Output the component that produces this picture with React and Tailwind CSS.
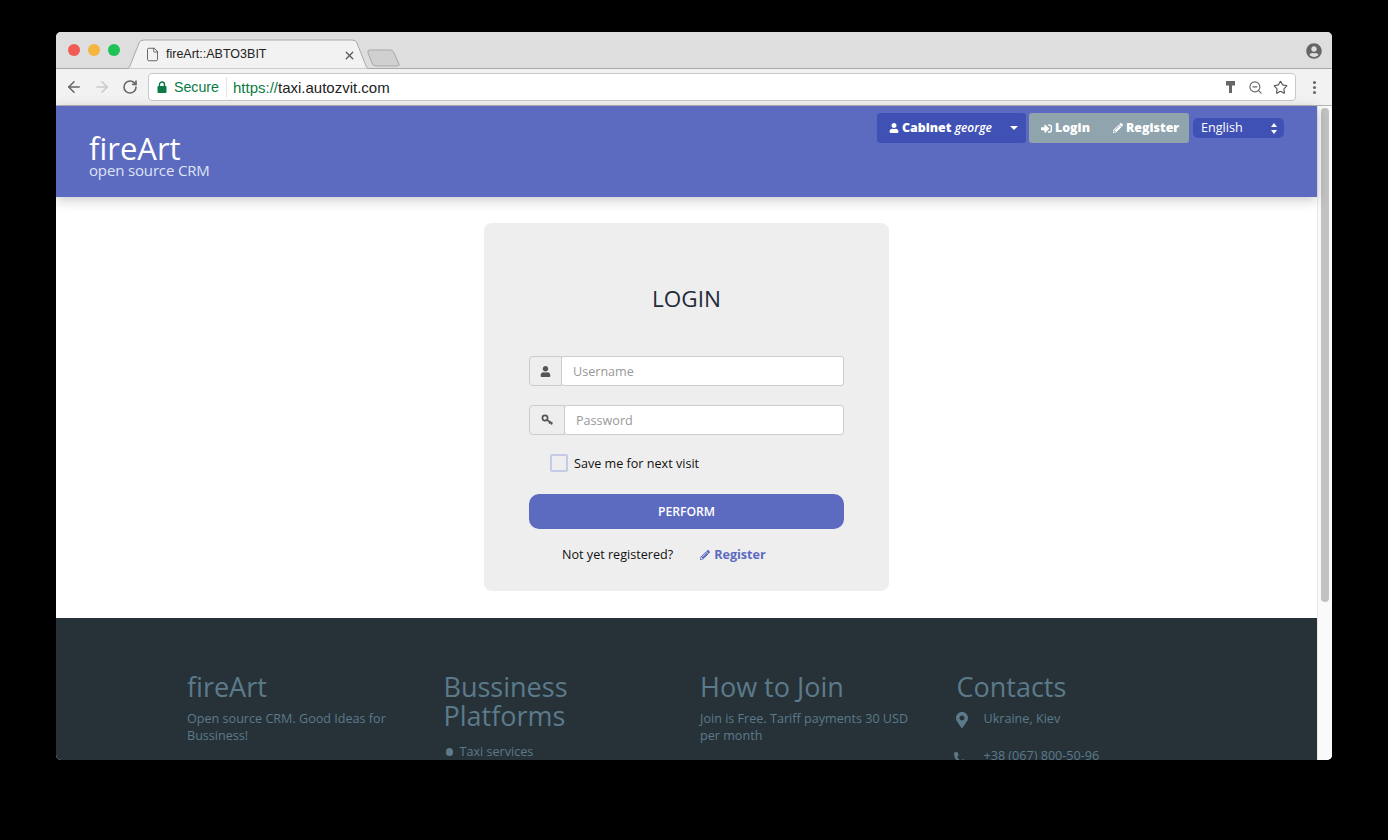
import React from "react";
import { FaUser, FaSignInAlt, FaPencilAlt, FaMapMarkerAlt, FaPhone, FaUserCircle } from "react-icons/fa";
import { ArrowLeft, ArrowRight, RotateCw, ZoomOut, Star, X, File } from "lucide-react";

const font = "font-['Open_Sans',sans-serif]";

function TabBar() {
  return (
    <div className="relative h-[37px] bg-[#dedede] border-b border-[#a9a9a9] flex items-center pl-[12px] font-['Liberation_Sans',sans-serif]">
      <div className="flex gap-2 items-center">
        <span className="w-3 h-3 rounded-full bg-[#f25b54]" />
        <span className="w-3 h-3 rounded-full bg-[#f5b53f]" />
        <span className="w-3 h-3 rounded-full bg-[#1dc455]" />
      </div>
      <svg className="absolute left-[70px] top-[7px]" width="280" height="30" viewBox="0 0 280 30">
        <path d="M0 29.5 H1 Q3 29.5 4 27 L13 4 Q14 1 18 1 H226 Q230 1 231 4 L240 27 Q241 29.5 243 29.5" fill="#f2f2f2" stroke="#a9a9a9" />
        <path d="M242 14 Q241 11 244 11 H264 Q267 11 268 14 L273 25 Q274 27 271 27 H250 Q247 27 246 24 Z" fill="#d0d0d0" stroke="#a8a8a8" />
      </svg>
      <File className="absolute left-[89px] top-[15px] text-[#555]" size={15} strokeWidth={1.4} />
      <span className="absolute left-[110px] top-[15px] text-[12.5px] leading-[15px] text-[#222]">fireArt::ABTO3BIT</span>
      <X className="absolute left-[287px] top-[17px] text-[#555]" size={13} strokeWidth={2.4} />
      <FaUserCircle className="absolute right-[10px] top-[11px] text-[#666]" size={16} />
    </div>
  );
}

function Toolbar() {
  return (
    <div className="h-[37px] bg-[#f2f2f2] border-b border-[#b5b5b5] flex items-center pl-[9px] pr-[16px] font-['Liberation_Sans',sans-serif]">
      <ArrowLeft className="text-[#666]" size={18} strokeWidth={2} />
      <ArrowRight className="ml-[10px] text-[#c9c9c9]" size={18} strokeWidth={2} />
      <RotateCw className="ml-[11px] text-[#666]" size={16} strokeWidth={2.4} />
      <div className="ml-[10px] flex-1 h-[28px] bg-white border border-[#c8c8c8] rounded-[4px] flex items-center">
        <svg className="ml-[8px]" width="10" height="12" viewBox="0 0 10 12">
          <path d="M2.5 5V3.5a2.5 2.5 0 0 1 5 0V5" fill="none" stroke="#0b7a45" strokeWidth="1.4" />
          <rect x="0.5" y="5" width="9" height="7" rx="1" fill="#0b7a45" />
        </svg>
        <span className="ml-[7px] text-[14.2px] text-[#0b7a45] leading-none">Secure</span>
        <span className="ml-[7px] w-px h-[20px] bg-[#e2e2e2]" />
        <span className="ml-[6px] text-[15px] leading-none text-[#0b7a45]">https://<span className="text-[#222]">taxi.autozvit.com</span></span>
        <svg className="ml-auto" width="9" height="14" viewBox="0 0 9 14"><path d="M0 1h9v4.5H6V13H3V5.5H0z" fill="#666" /></svg>
        <ZoomOut className="ml-[13px] text-[#666]" size={15} strokeWidth={1.8} />
        <Star className="ml-[10px] mr-[7px] text-[#555]" size={15} strokeWidth={1.8} />
      </div>
      <div className="ml-[17px] flex flex-col gap-[2px]">
        <span className="w-[3px] h-[3px] rounded-full bg-[#666]" />
        <span className="w-[3px] h-[3px] rounded-full bg-[#666]" />
        <span className="w-[3px] h-[3px] rounded-full bg-[#666]" />
      </div>
    </div>
  );
}

function Header() {
  return (
    <header className="relative z-10 h-[91px] bg-[#5c6bc0] shadow-[0_3px_12px_rgba(0,0,0,0.22)] flex justify-between pl-[33px] pr-[33px]">
      <div className="pt-[27px] text-white">
        <div className="text-[31px] leading-[30px]">fireArt</div>
        <div className="text-[15px] leading-[14px] text-[#dfe3f5] tracking-[-0.15px]">open source CRM</div>
      </div>
      <div className="pt-[7px] flex items-start text-white text-[12.4px] font-extrabold">
        <div className="w-[149px] h-[30px] bg-[#3f51b5] rounded-[3px] flex items-center pl-[12px]">
          <FaUser size={10} />
          <span className="ml-[3px]">Cabinet <em className="font-semibold text-[12px]">george</em></span>
          <span className="ml-auto mr-[8px] w-0 h-0 border-x-[4px] border-x-transparent border-t-[4px] border-t-white" />
        </div>
        <div className="ml-[3px] w-[160px] h-[30px] bg-[#90a4ae] rounded-[3px] flex items-center pl-[12px]">
          <FaSignInAlt size={11} />
          <span className="ml-[3px]">Login</span>
          <FaPencilAlt className="ml-[23px]" size={10} />
          <span className="ml-[3px]">Register</span>
        </div>
        <div className="ml-[4px] mt-[5px] w-[91px] h-[20px] bg-[#3f51b5] rounded-[5px] flex items-center pl-[8px] font-normal text-[12.6px]">
          <span>English</span>
          <svg className="ml-auto mr-[7px]" width="6" height="11" viewBox="0 0 6 11"><path d="M3 0l3 4H0zM3 11L0 7h6z" fill="#fff" /></svg>
        </div>
      </div>
    </header>
  );
}

function KeyIcon() {
  return (
    <svg width="13" height="12" viewBox="0 0 13 12" fill="none" stroke="#555">
      <circle cx="4" cy="4" r="2.6" strokeWidth="1.7" />
      <path d="M6 6l5.5 3.5M9 8l-1 1.5M11 9.2l-.8 1.3" strokeWidth="1.6" />
    </svg>
  );
}

function Field({ icon, placeholder, addon }) {
  return (
    <div className="flex h-[30px]">
      <div className={`${addon} bg-[#eee] border border-[#ccc] rounded-l-[4px] flex items-center justify-center text-[#555]`}>{icon}</div>
      <div className="flex-1 -ml-px bg-white border border-[#ccc] rounded-[3px] flex items-center pl-[11px] pt-[2px] text-[12.6px] text-[#999]">{placeholder}</div>
    </div>
  );
}

function LoginCard() {
  return (
    <div className="w-[405px] h-[368px] mx-auto bg-[#eee] rounded-[8px] px-[45px] pt-[60px]">
      <h1 className="text-center text-[22.5px] leading-[32px] text-[#222b38]">LOGIN</h1>
      <div className="mt-[41px]"><Field addon="w-[33px]" icon={<FaUser size={11} />} placeholder="Username" /></div>
      <div className="mt-[19px]"><Field addon="w-[36px]" icon={<KeyIcon />} placeholder="Password" /></div>
      <div className="mt-[19px] ml-[21px] flex items-center h-[18px]">
        <span className="w-[18px] h-[18px] border-2 border-[#c5cae9] bg-[#eee] rounded-[2px]" />
        <span className="ml-[6px] pt-[2px] text-[12.6px] text-[#111]">Save me for next visit</span>
      </div>
      <div className="mt-[22px] h-[35px] pt-[2px] bg-[#5c6bc0] rounded-[10px] flex items-center justify-center text-white text-[12.2px] font-semibold">PERFORM</div>
      <div className="mt-[16px] flex items-center h-[18px] pt-[2px] text-[12.6px]">
        <span className="ml-[33px] text-[#111]">Not yet registered?</span>
        <FaPencilAlt className="ml-[27px] text-[#5c6bc0]" size={10} />
        <span className="ml-[4px] font-bold text-[#5c6bc0]">Register</span>
      </div>
    </div>
  );
}

function Footer() {
  const h = "text-[27px] leading-[29px] text-[#5c7a8a]";
  const p = "text-[12.6px] leading-[17px] text-[#5c7a8a]";
  return (
    <footer className="h-[142px] overflow-hidden bg-[#263238] pt-[54px]">
      <div className="w-[1026px] ml-[116px] grid grid-cols-4">
        <div className="px-[15px]">
          <h2 className={h}>fireArt</h2>
          <p className={`${p} mt-[9px]`}>Open source CRM. Good Ideas for Bussiness!</p>
        </div>
        <div className="px-[15px]">
          <h2 className={h}>Bussiness Platforms</h2>
          <div className={`${p} mt-[13px] flex items-center`}>
            <span className="ml-[2px] w-[7px] h-[8px] rounded-full bg-[#5c7a8a]" />
            <span className="ml-[7px]">Taxi services</span>
          </div>
        </div>
        <div className="px-[15px]">
          <h2 className={h}>How to Join</h2>
          <p className={`${p} mt-[9px]`}>Join is Free. Tariff payments 30 USD per month</p>
        </div>
        <div className="px-[15px]">
          <h2 className={h}>Contacts</h2>
          <div className={`${p} mt-[9px] flex`}>
            <FaMapMarkerAlt className="mt-[2px] -ml-[3px]" size={16} />
            <span className="ml-[14px]">Ukraine, Kiev</span>
          </div>
          <div className={`${p} mt-[19px] flex`}>
            <FaPhone className="mt-[5px] -ml-[3px] scale-x-[-1]" size={12} />
            <span className="ml-[18px]">+38 (067) 800-50-96</span>
          </div>
        </div>
      </div>
    </footer>
  );
}

export default function App() {
  return (
    <div className={`w-[1388px] h-[840px] bg-black pt-[32px] pl-[56px] overflow-hidden ${font}`}>
      <div className="w-[1276px] h-[728px] rounded-[5px] overflow-hidden flex flex-col bg-white">
        <TabBar />
        <Toolbar />
        <div className="flex flex-1 min-h-0">
          <div className="flex-1 min-w-0 flex flex-col">
            <Header />
            <main className="h-[421px] pt-[26px] bg-white"><LoginCard /></main>
            <Footer />
          </div>
          <div className="w-[15px] bg-[#fafafa] border-l border-[#e8e8e8] pt-[2px] pl-[3px]">
            <div className="w-[8px] h-[494px] rounded-full bg-[#c2c2c2]" />
          </div>
        </div>
      </div>
    </div>
  );
}
